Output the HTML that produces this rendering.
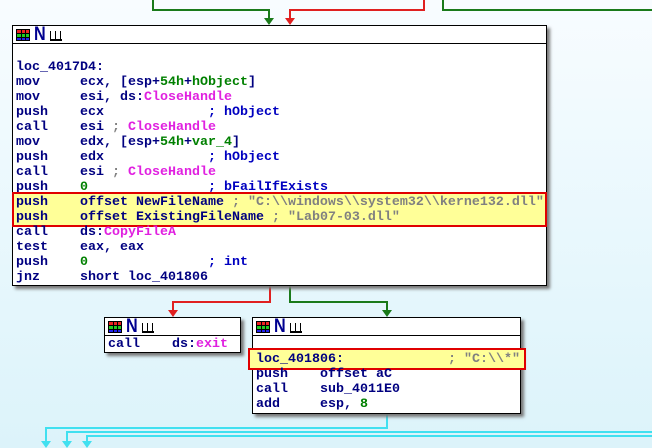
<!DOCTYPE html>
<html><head><meta charset="utf-8"><style>
*{margin:0;padding:0;box-sizing:border-box}
body{width:652px;height:448px;overflow:hidden;position:relative;background:linear-gradient(#f8fcff,#e9f8fd 50%,#dcf3fa);font-family:"Liberation Mono",monospace;font-weight:bold;font-size:13.33px;color:#000080}
.box{position:absolute;background:#fff;border:1px solid #000;box-shadow:3px 3px 3px #777}
.hdr{height:18px;border-bottom:1px solid #000;position:relative}
.ln{position:absolute;left:3px;height:15px;line-height:15px;white-space:pre}
.g{color:#008000}.p{color:#e020e0}.c{color:#0000c0}.s{color:#808080}
.hl{position:absolute;background:#ffff98;border:2px solid #e00000}
.ic{position:absolute;top:3px;left:3px;width:14px;height:12px;background:
linear-gradient(90deg,#000 0 1px,transparent 1px 5px,#000 5px 6px,transparent 6px 9px,#000 9px 10px,transparent 10px 13px,#000 13px),
linear-gradient(#000 0 1px,#e22 1px 4px,#000 4px 5px,#2c2 5px 8px,#000 8px 9px,#22e 9px 11px,#000 11px)}
.N{position:absolute;left:21px;top:-1px;font-family:"Liberation Sans",sans-serif;font-weight:bold;font-size:19px;color:#000090;line-height:19px;transform:scaleX(0.85);transform-origin:left}
.gl{position:absolute;left:37px;top:5px;width:12px;height:10px;border-left:1px solid #000;border-bottom:2px solid #000}
.gl:after{content:"";position:absolute;left:4px;top:0;width:4px;height:8px;border-left:1px solid #000;border-right:1px solid #000}
svg{position:absolute;left:0;top:0}
</style></head><body>
<svg width="652" height="448">
<g fill="none" stroke-width="2">
<path d="M153 0V10H269V20" stroke="#1a7a1a"/>
<path d="M424 0V10H290V20" stroke="#e02020"/>
<path d="M443 0V10H652" stroke="#1a7a1a"/>
<path d="M270 286V302H173V312" stroke="#e02020"/>
<path d="M290 286V302H387V312" stroke="#1a7a1a"/>
<path d="M387 414V428H46V444" stroke="#40e0f0"/>
<path d="M652 432H67V444M652 436H87V444" stroke="#40e0f0"/>
</g>
<path d="M264 18h10l-5 7z" fill="#1a7a1a"/><path d="M285 18h10l-5 7z" fill="#e02020"/>
<path d="M168 310h10l-5 7z" fill="#e02020"/><path d="M382 310h10l-5 7z" fill="#1a7a1a"/>
<path d="M41 441h10l-5 7z M62 441h10l-5 7z M82 441h10l-5 7z" fill="#40e0f0"/>
</svg>

<div class="box" style="left:12px;top:25px;width:535px;height:261px">
<div class="hdr"><div class="ic"></div><div class="N">N</div><div class="gl"></div></div>
<div class="hl" style="left:-1px;top:166px;width:535px;height:35px"></div>
<div class="ln" style="top:34px">loc_4017D4:</div>
<div class="ln" style="top:49px">mov     ecx, [esp+<span class="g">54h</span>+<span class="g">hObject</span>]</div>
<div class="ln" style="top:64px">mov     esi, ds:<span class="p">CloseHandle</span></div>
<div class="ln" style="top:79px">push    ecx             <span class="c">; hObject</span></div>
<div class="ln" style="top:94px">call    esi <span class="s">;</span> <span class="p">CloseHandle</span></div>
<div class="ln" style="top:109px">mov     edx, [esp+<span class="g">54h</span>+<span class="g">var_4</span>]</div>
<div class="ln" style="top:124px">push    edx             <span class="c">; hObject</span></div>
<div class="ln" style="top:139px">call    esi <span class="s">;</span> <span class="p">CloseHandle</span></div>
<div class="ln" style="top:154px;height:12px;overflow:hidden">push    <span class="g">0</span>               <span class="c">; bFailIfExists</span></div>
<div class="ln" style="top:169px">push    offset NewFileName <span class="s">; "C:\\windows\\system32\\kerne132.dll"</span></div>
<div class="ln" style="top:184px">push    offset ExistingFileName <span class="s">; "Lab07-03.dll"</span></div>
<div class="ln" style="top:199px">call    ds:<span class="p">CopyFileA</span></div>
<div class="ln" style="top:214px">test    eax, eax</div>
<div class="ln" style="top:229px">push    <span class="g">0</span>               <span class="c">; int</span></div>
<div class="ln" style="top:244px">jnz     short loc_401806</div>
</div>

<div class="box" style="left:104px;top:317px;width:137px;height:36px">
<div class="hdr"><div class="ic"></div><div class="N">N</div><div class="gl"></div></div>
<div class="ln" style="top:19px">call    ds:<span class="p">exit</span></div>
</div>

<div class="box" style="left:252px;top:317px;width:269px;height:97px">
<div class="hdr"><div class="ic"></div><div class="N">N</div><div class="gl"></div></div>
<div class="hl" style="left:-5px;top:30px;width:278px;height:22px"></div>
<div class="ln" style="top:34px">loc_401806:             <span class="s">; "C:\\*"</span></div>
<div class="ln" style="top:49px">push    offset aC</div>
<div class="ln" style="top:64px">call    sub_4011E0</div>
<div class="ln" style="top:79px">add     esp, <span class="g">8</span></div>
</div>
</body></html>
